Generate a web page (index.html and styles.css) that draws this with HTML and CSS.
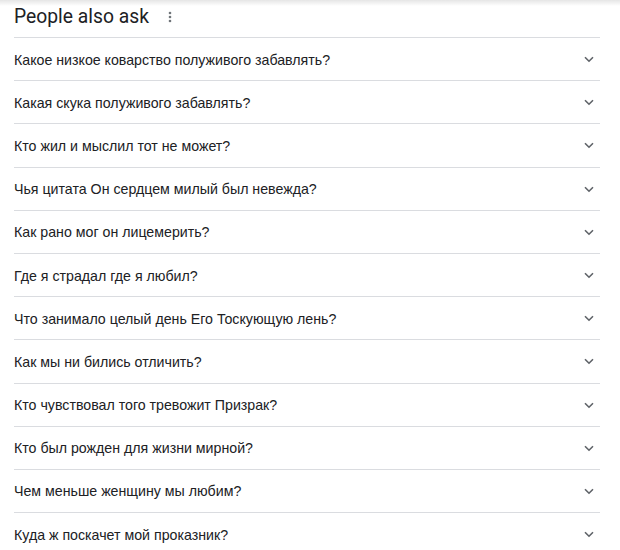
FILE: index.html
```html
<!DOCTYPE html>
<html lang="ru">
<head>
    <meta charset="UTF-8">
    <meta name="viewport" content="width=device-width, initial-scale=1.0">
    <title>People also ask</title>
    <link rel="stylesheet" href="styles.css">
</head>
<body>

    <div class="shadow"></div>

    <div id="container">
        <div class="header">
            <span class="title">People also ask</span>
            <svg class="dots" width="4" height="12" viewBox="0 0 4 12">
                <circle cx="2" cy="2" r="1.3"></circle>
                <circle cx="2" cy="6" r="1.3"></circle>
                <circle cx="2" cy="10" r="1.3"></circle>
            </svg>
        </div>

        <div class="question">
            <span>Какое низкое коварство полуживого забавлять?</span>
            <svg class="chevron" width="10" height="7" viewBox="0 0 10 7"><path d="M1 1.2l4 4 4-4"></path></svg>
        </div>
        <div class="question">
            <span>Какая скука полуживого забавлять?</span>
            <svg class="chevron" width="10" height="7" viewBox="0 0 10 7"><path d="M1 1.2l4 4 4-4"></path></svg>
        </div>
        <div class="question">
            <span>Кто жил и мыслил тот не может?</span>
            <svg class="chevron" width="10" height="7" viewBox="0 0 10 7"><path d="M1 1.2l4 4 4-4"></path></svg>
        </div>
        <div class="question">
            <span>Чья цитата Он сердцем милый был невежда?</span>
            <svg class="chevron" width="10" height="7" viewBox="0 0 10 7"><path d="M1 1.2l4 4 4-4"></path></svg>
        </div>
        <div class="question">
            <span>Как рано мог он лицемерить?</span>
            <svg class="chevron" width="10" height="7" viewBox="0 0 10 7"><path d="M1 1.2l4 4 4-4"></path></svg>
        </div>
        <div class="question">
            <span>Где я страдал где я любил?</span>
            <svg class="chevron" width="10" height="7" viewBox="0 0 10 7"><path d="M1 1.2l4 4 4-4"></path></svg>
        </div>
        <div class="question">
            <span>Что занимало целый день Его Тоскующую лень?</span>
            <svg class="chevron" width="10" height="7" viewBox="0 0 10 7"><path d="M1 1.2l4 4 4-4"></path></svg>
        </div>
        <div class="question">
            <span>Как мы ни бились отличить?</span>
            <svg class="chevron" width="10" height="7" viewBox="0 0 10 7"><path d="M1 1.2l4 4 4-4"></path></svg>
        </div>
        <div class="question">
            <span>Кто чувствовал того тревожит Призрак?</span>
            <svg class="chevron" width="10" height="7" viewBox="0 0 10 7"><path d="M1 1.2l4 4 4-4"></path></svg>
        </div>
        <div class="question">
            <span>Кто был рожден для жизни мирной?</span>
            <svg class="chevron" width="10" height="7" viewBox="0 0 10 7"><path d="M1 1.2l4 4 4-4"></path></svg>
        </div>
        <div class="question">
            <span>Чем меньше женщину мы любим?</span>
            <svg class="chevron" width="10" height="7" viewBox="0 0 10 7"><path d="M1 1.2l4 4 4-4"></path></svg>
        </div>
        <div class="question">
            <span>Куда ж поскачет мой проказник?</span>
            <svg class="chevron" width="10" height="7" viewBox="0 0 10 7"><path d="M1 1.2l4 4 4-4"></path></svg>
        </div>
    </div>

</body>
</html>
```

FILE: styles.css
```css
body {
    font-family: Arial, 'Liberation Sans', sans-serif;
    margin: 0;
    padding: 0;
    background-color: #fff;
    color: #202124;
    overflow: hidden;
}

.shadow {
    position: absolute;
    top: 0;
    left: 0;
    right: 0;
    height: 6px;
    background: linear-gradient(to bottom, rgba(0, 0, 0, 0.1), rgba(0, 0, 0, 0));
}

#container {
    width: 586px;
    margin-left: 14px;
}

.header {
    display: flex;
    align-items: center;
    height: 37px;
    border-bottom: 1px solid #dadce0;
}

.title {
    font-family: Roboto, Arial, sans-serif;
    font-size: 19.3px;
    line-height: 30px;
    color: #202124;
    padding-bottom: 4px;
}

.dots {
    margin-left: 19px;
    margin-bottom: 4px;
    fill: #70757a;
}

.question {
    display: flex;
    align-items: center;
    justify-content: space-between;
    box-sizing: border-box;
    height: 43.2px;
    padding-top: 1px;
    border-bottom: 1px solid #dadce0;
    font-size: 14.2px;
}

.chevron {
    margin-right: 6px;
    fill: none;
    stroke: #5f6368;
    stroke-width: 1.6;
}
```
